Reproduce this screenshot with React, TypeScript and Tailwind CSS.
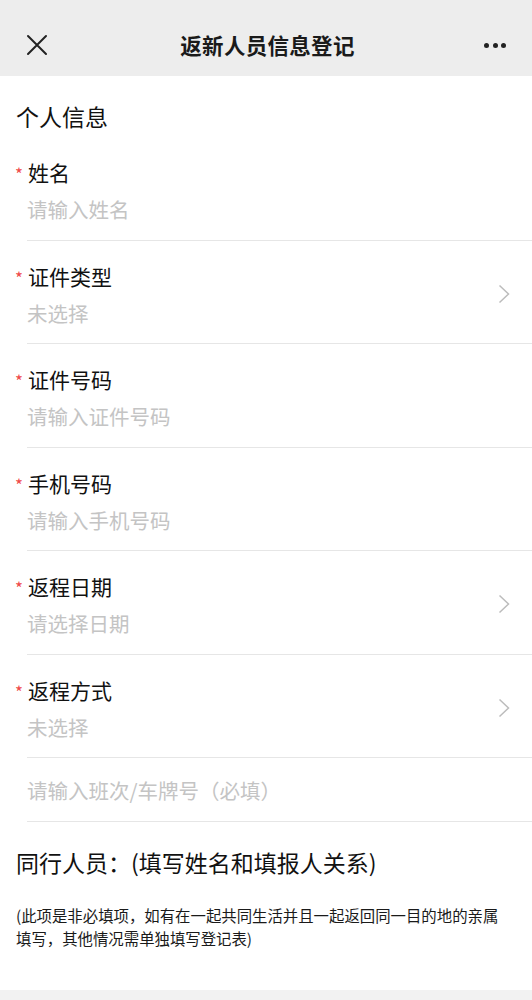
type Field = {
  label: string;
  placeholder: string;
  select?: boolean;
};

const fields: Field[] = [
  { label: '姓名', placeholder: '请输入姓名' },
  { label: '证件类型', placeholder: '未选择', select: true },
  { label: '证件号码', placeholder: '请输入证件号码' },
  { label: '手机号码', placeholder: '请输入手机号码' },
  { label: '返程日期', placeholder: '请选择日期', select: true },
  { label: '返程方式', placeholder: '未选择', select: true },
];

const font = { fontFamily: '"Noto Sans CJK SC", "Noto Sans", sans-serif' };

export default function App() {
  return (
    <div className="w-[532px] min-h-[1000px] bg-white text-[#111]" style={font}>
      {/* header */}
      <div className="h-[76px] bg-[#ededed] flex items-center justify-between pl-[25px] pr-[26px] pt-[14px]">
        <svg width="24" height="24" viewBox="0 0 24 24" fill="none" stroke="#222" strokeWidth="2" strokeLinecap="round">
          <path d="M3 3 L21 21 M21 3 L3 21" />
        </svg>
        <div className="text-[21.5px] font-bold tracking-[0.3px] text-[#1a1a1a] ml-[4px]">返新人员信息登记</div>
        <div className="flex items-center gap-[3.5px] w-[24px] justify-end">
          <span className="w-[5px] h-[5px] rounded-full bg-[#222]" />
          <span className="w-[5px] h-[5px] rounded-full bg-[#222]" />
          <span className="w-[5px] h-[5px] rounded-full bg-[#222]" />
        </div>
      </div>

      <div className="px-[16px] pt-[25px] pb-[6px] text-[23px] leading-[30px]">个人信息</div>

      {fields.map((f) => (
        <div key={f.label} className="ml-[27px] border-b border-[#e6e6e6] pt-[20px] pb-[16.5px] pr-[22px] flex items-center justify-between">
          <div>
            <div className="relative text-[21px] leading-[30px] pl-[1px]">
              <span className="absolute left-[-12px] top-[2px] text-[17px] leading-[30px] text-[#ef4a4a]">*</span>
              {f.label}
            </div>
            <div className="mt-[8px] text-[20.5px] leading-[28px] text-[#c4c4c4]">{f.placeholder}</div>
          </div>
          {f.select && (
            <svg width="12" height="20" viewBox="0 0 12 20" fill="none" stroke="#bcbcbc" strokeWidth="1.5">
              <path d="M1.5 1.5 L10.5 10 L1.5 18.5" />
            </svg>
          )}
        </div>
      ))}

      <div className="ml-[27px] border-b border-[#e6e6e6] pt-[17.5px] pb-[17.5px] text-[20.5px] leading-[28px] text-[#c4c4c4]">
        请输入班次/车牌号（必填）
      </div>

      <div className="px-[16px] mt-[25px] text-[23px] leading-[30px]">同行人员：(填写姓名和填报人关系)</div>

      <div className="pl-[16px] mt-[26.5px] text-[15.4px] leading-[23px] text-[#1a1a1a] w-[509px]">
        (此项是非必填项，如有在一起共同生活并且一起返回同一目的地的亲属填写，其他情况需单独填写登记表)
      </div>

      <div className="mt-[40px] h-[10px] bg-[#f2f2f2]" />
    </div>
  );
}
